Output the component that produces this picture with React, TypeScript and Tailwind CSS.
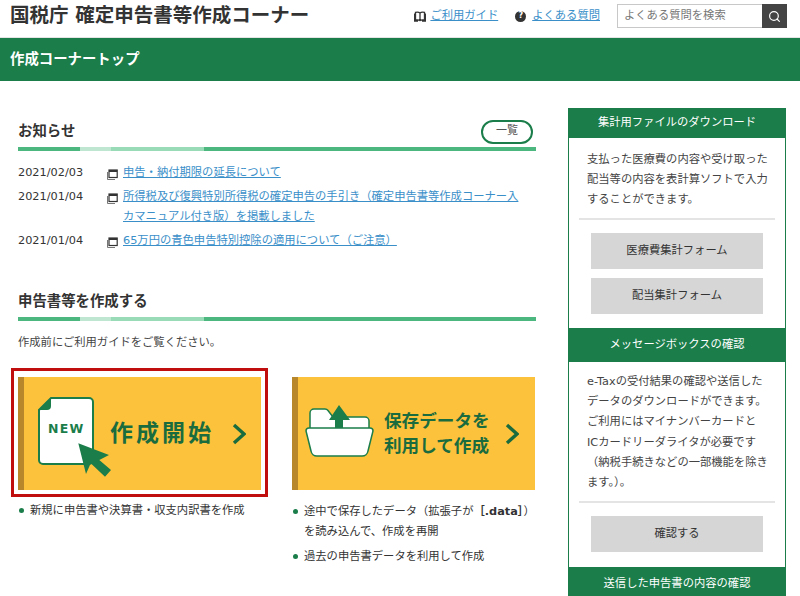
import { Search } from "lucide-react"

const font = "font-['DejaVu_Sans','Noto_Sans_CJK_JP',sans-serif]"

function SectionBar() {
  return (
    <div className="flex h-1 w-full">
      <div className="w-[62px] bg-[#4cb87f]" />
      <div className="w-[31px] bg-[#bfe6d0]" />
      <div className="w-[93px] bg-[#9adbb7]" />
      <div className="flex-1 bg-[#4cb87f]" />
    </div>
  )
}

function NewsIcon() {
  return (
    <svg width="11" height="11" viewBox="0 0 11 11" className="shrink-0">
      <path d="M0.500 3v7.500H8" fill="none" stroke="#777" strokeWidth="1" />
      <rect x="2" y="1" width="8.200" height="7.500" fill="#fff" stroke="#333" strokeWidth="1.200" />
      <rect x="2" y="1" width="8.200" height="2" fill="#333" />
    </svg>
  )
}

function NewsRow({ date, children }: { date: string; children: React.ReactNode }) {
  return (
    <div className="flex text-[11.300px] leading-[20px] text-[#333]">
      <div className="w-[89px] shrink-0">{date}</div>
      <div className="mt-[6px] h-[11px] w-[16px] shrink-0">
        <NewsIcon />
      </div>
      <a className="w-[400px] text-[#3a8fc9] underline">{children}</a>
    </div>
  )
}

function Chevron() {
  return (
    <svg width="14" height="22" viewBox="0 0 14 22" className="shrink-0">
      <path d="M2 2 12 11 2 20" fill="none" stroke="#1a6b3e" strokeWidth="3.400" />
    </svg>
  )
}

function NewDocIcon() {
  return (
    <svg width="72" height="81" viewBox="0 0 72 81" className="shrink-0 overflow-visible">
      <path
        d="M13 5H51a4 4 0 0 1 4 4V67a4 4 0 0 1-4 4H5a4 4 0 0 1-4-4V17Z"
        fill="#fff"
        stroke="#1a7d4a"
        strokeWidth="2"
      />
      <path d="M13 5V13a4 4 0 0 1-4 4H1Z" fill="#1a7d4a" />
      <text x="10" y="40" fontSize="12.500" fontWeight="700" letterSpacing="1.200" fill="#1a7d4a">
        NEW
      </text>
      <path d="M40.300 50.300 71 62 61.300 67 73 77 67 83.700 52.700 70.300 48 81Z" fill="#1a7d4a" />
    </svg>
  )
}

function FolderIcon() {
  return (
    <svg width="69" height="52" viewBox="0 0 69 52" className="mt-[-5px] shrink-0">
      <path
        d="M5 24V8a4 4 0 0 1 4-4H20a4 4 0 0 1 3 1.500L28 12H60a4 4 0 0 1 4 4V24Z"
        fill="#fff"
        stroke="#1a7d4a"
        strokeWidth="1.500"
      />
      <path
        d="M1 26a3 3 0 0 1 3-3H65a3 3 0 0 1 3 3L63 46a6 6 0 0 1-6 5H12A6 6 0 0 1 6 46Z"
        fill="#fff"
        stroke="#1a7d4a"
        strokeWidth="1.500"
      />
      <path d="M24 15 34 0 45 15H38V23H30V15Z" fill="#1a7d4a" />
    </svg>
  )
}

function SideHeader({ children, className }: { children: React.ReactNode; className: string }) {
  return (
    <div className={`flex items-center justify-center bg-[#1a7d4a] pt-[1px] text-[11.300px] text-white ${className}`}>
      {children}
    </div>
  )
}

function SideButton({ children }: { children: React.ReactNode }) {
  return (
    <div className="mx-[22px] flex h-[36px] items-center justify-center bg-[#d6d6d6] pt-[1px] text-[11.300px] text-[#333]">
      {children}
    </div>
  )
}

function Bullet({ children }: { children: React.ReactNode }) {
  return (
    <li className="flex text-[11.300px] leading-[20px] text-[#333]">
      <span className="mt-[7px] mr-[6px] ml-[1px] h-[5px] w-[5px] shrink-0 rounded-full bg-[#1a7d4a]" />
      <span>{children}</span>
    </li>
  )
}

export default function App() {
  return (
    <div className={`h-[596px] w-[800px] overflow-hidden bg-white ${font}`}>
      <header className="flex h-[38px] items-center border-b border-[#e4e4e4] pr-[13px] pb-[5px] pl-[10px]">
        <div className="text-[19.500px] font-bold text-[#333]">国税庁 確定申告書等作成コーナー</div>
        <div className="ml-auto flex items-center text-[11.300px]">
          <svg width="12" height="11" viewBox="0 0 12 11" className="mr-[4px]">
            <path
              d="M6 2C5 1 3 1 1.500 1.300V9C3 8.700 5 8.700 6 9.600 7 8.700 9 8.700 10.500 9V1.300C9 1 7 1 6 2ZM6 2V9.600M0.500 2.500V10H4M11.500 2.500V10H8"
              fill="none"
              stroke="#333"
              strokeWidth="1.300"
            />
          </svg>
          <a className="text-[#3a8fc9] underline">ご利用ガイド</a>
          <span className="ml-[17px] mr-[6px] flex h-[11px] w-[11px] items-center justify-center rounded-full bg-[#333] text-[8px] font-bold text-white">
            ?
          </span>
          <a className="text-[#3a8fc9] underline">よくある質問</a>
          <div className="ml-[17px] flex h-[24px] w-[170px] items-center border border-[#c8c8c8] pl-[6px] text-[#777]">
            よくある質問を検索
            <div className="-my-px -mr-px ml-auto flex h-[24px] w-[25px] items-center justify-center bg-[#444]">
              <Search size={13} color="#fff" strokeWidth={2.200} />
            </div>
          </div>
        </div>
      </header>

      <div className="flex h-[43px] items-center bg-[#1a7d4a] pl-[10px] text-[14.400px] font-bold text-white">
        作成コーナートップ
      </div>

      <div className="flex pt-[27px] pl-[18px]">
        <main className="w-[518px] shrink-0">
          <div className="flex h-[39px] items-center justify-between pt-[8px] pr-[3px]">
            <h2 className="text-[14.400px] font-bold text-[#333]">お知らせ</h2>
            <span className="flex h-[24px] w-[52px] items-center justify-center rounded-full border-2 border-[#1a7d4a] text-[11px] text-[#555]">
              一覧
            </span>
          </div>
          <SectionBar />
          <div className="mt-[12px] flex flex-col gap-1">
            <NewsRow date="2021/02/03">申告・納付期限の延長について</NewsRow>
            <NewsRow date="2021/01/04">
              所得税及び復興特別所得税の確定申告の手引き（確定申告書等作成コーナー入カマニュアル付き版）を掲載しました
            </NewsRow>
            <NewsRow date="2021/01/04">65万円の青色申告特別控除の適用について（ご注意）</NewsRow>
          </div>

          <h2 className="mt-[39px] text-[14.400px] leading-[22px] font-bold text-[#333]">申告書等を作成する</h2>
          <div className="mt-[5px]">
            <SectionBar />
          </div>
          <p className="mt-[12px] text-[11.300px] leading-[20px] text-[#444]">作成前にご利用ガイドをご覧ください。</p>

          <div className="mt-[24px] flex">
            <div className="w-[274px] shrink-0">
              <div className="-mt-[9px] -ml-[7px] w-[257px] border-[3px] border-[#c00d0d] px-[4px] pt-[6px] pb-[4px]">
                <div className="flex h-[113px] items-center border-l-[6px] border-[#b8862b] bg-[#fdc23c] pl-[14px]">
                  <NewDocIcon />
                  <span className="text-[23px] font-bold tracking-[3px] text-[#1a6b3e]">作成開始</span>
                  <div className="ml-[18px]">
                    <Chevron />
                  </div>
                </div>
              </div>
              <ul className="mt-[4px]">
                <Bullet>新規に申告書や決算書・収支内訳書を作成</Bullet>
              </ul>
            </div>
            <div className="w-[243px] shrink-0">
              <div className="flex h-[113px] items-center border-l-[6px] border-[#b8862b] bg-[#fdc23c] pl-[7px]">
                <FolderIcon />
                <span className="ml-[10px] text-[17.600px] leading-[25px] font-bold text-[#1a6b3e]">
                  保存データを
                  <br />
                  利用して作成
                </span>
                <div className="ml-[15px]">
                  <Chevron />
                </div>
              </div>
              <ul className="mt-[12px] flex flex-col gap-[5px]">
                <Bullet>
                  <span className="whitespace-nowrap">
                    途中で保存したデータ（拡張子が<b className="font-bold">［.data］</b>）
                  </span>
                  <br />
                  を読み込んで、作成を再開
                </Bullet>
                <Bullet>過去の申告書データを利用して作成</Bullet>
              </ul>
            </div>
          </div>
        </main>

        <aside className="ml-[32px] w-[218px] shrink-0 border-x border-[#1a7d4a]">
          <SideHeader className="h-[30px]">集計用ファイルのダウンロード</SideHeader>
          <div className="pb-[14px]">
            <p className="whitespace-nowrap px-[18px] pt-[12px] pb-[8px] text-[11.300px] leading-[20px] text-[#444]">
              支払った医療費の内容や受け取った
              <br />
              配当等の内容を表計算ソフトで入力
              <br />
              することができます。
            </p>
            <div className="mx-[10px] h-[2px] bg-[#e4e4e4]" />
            <div className="mt-[13px] flex flex-col gap-[9px]">
              <SideButton>医療費集計フォーム</SideButton>
              <SideButton>配当集計フォーム</SideButton>
            </div>
          </div>
          <SideHeader className="h-[34px]">メッセージボックスの確認</SideHeader>
          <div className="pb-[15px]">
            <p className="whitespace-nowrap px-[18px] pt-[10px] pb-[8px] text-[11.300px] leading-[20.200px] text-[#444]">
              e-Taxの受付結果の確認や送信した
              <br />
              データのダウンロードができます。
              <br />
              ご利用にはマイナンバーカードと
              <br />
              ICカードリーダライタが必要です
              <br />
              （納税手続きなどの一部機能を除き
              <br />
              ます。）。
            </p>
            <div className="mx-[10px] h-[2px] bg-[#e4e4e4]" />
            <div className="mt-[13px]">
              <SideButton>確認する</SideButton>
            </div>
          </div>
          <SideHeader className="h-[34px]">送信した申告書の内容の確認</SideHeader>
        </aside>
      </div>
    </div>
  )
}
